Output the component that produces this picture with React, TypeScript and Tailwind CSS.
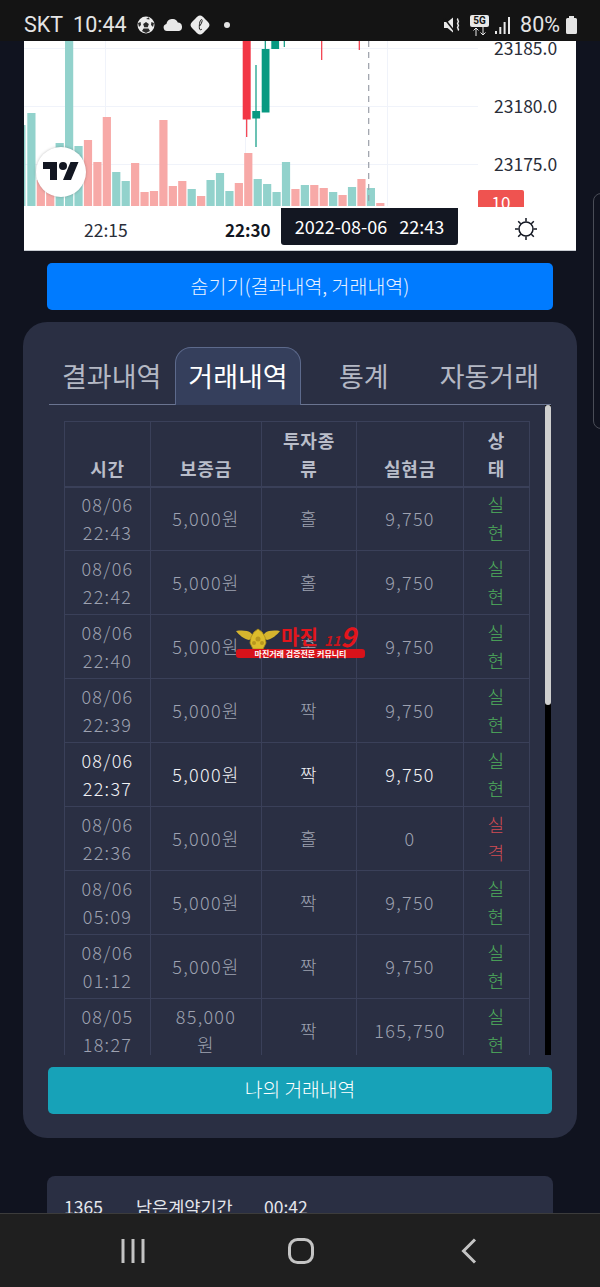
const bars: [number, "t" | "p"][] = [
  [113, "t"], [180, "p"], [183, "p"], [143, "t"], [30, "t"], [146, "t"], [140, "p"], [162, "p"], [117, "p"], [172, "t"],
  [181, "t"], [163, "p"], [192, "p"], [191, "p"], [120, "p"], [186, "p"], [181, "p"], [189, "t"], [196, "p"], [180, "t"],
  [173, "t"], [191, "t"], [183, "p"], [153, "p"], [179, "t"], [184, "t"], [192, "t"], [162, "t"], [189, "p"], [185, "t"],
  [185, "p"], [188, "p"], [192, "t"], [195, "p"], [187, "t"], [179, "p"], [188, "t"], [203, "p"],
];

const rows = [
  { time: ["08/06", "22:43"], deposit: "5,000원", kind: "홀", amount: "9,750", status: "실현" },
  { time: ["08/06", "22:42"], deposit: "5,000원", kind: "홀", amount: "9,750", status: "실현" },
  { time: ["08/06", "22:40"], deposit: "5,000원", kind: "홀", amount: "9,750", status: "실현" },
  { time: ["08/06", "22:39"], deposit: "5,000원", kind: "짝", amount: "9,750", status: "실현" },
  { time: ["08/06", "22:37"], deposit: "5,000원", kind: "짝", amount: "9,750", status: "실현", active: true },
  { time: ["08/06", "22:36"], deposit: "5,000원", kind: "홀", amount: "0", status: "실격" },
  { time: ["08/06", "05:09"], deposit: "5,000원", kind: "짝", amount: "9,750", status: "실현" },
  { time: ["08/06", "01:12"], deposit: "5,000원", kind: "짝", amount: "9,750", status: "실현" },
  { time: ["08/05", "18:27"], deposit: "85,000원", kind: "짝", amount: "165,750", status: "실현" },
];

function StatusBar() {
  return (
    <div className="h-[41px] shrink-0 bg-[#141414] flex items-center pt-[9px] pl-[24px] pr-[23px] font-['Roboto',sans-serif] text-[#e4e4e4] text-[21.5px]">
      <span>SKT</span>
      <span className="ml-[10px]">10:44</span>
      <svg className="ml-[10px]" width="18" height="18" viewBox="0 0 18 18">
        <circle cx="9" cy="9" r="8.500" fill="#ececec" />
        <path d="M9 6l2.800 2-1 3.200H7.200l-1-3.200z" fill="#2a2a2a" />
        <path d="M6 1.200 9 3l3-1.800.6 2.200L9 3zM1 7l2.600-1 .4 3L2 11zM17 7l-2.600-1-.4 3 2 2zM5 15l1.500-2.500h5L13 15l-4 2z" fill="#2a2a2a" />
      </svg>
      <svg className="ml-[8px]" width="20" height="12" viewBox="0 0 20 12">
        <path d="M4 12a3.600 3.600 0 0 1-.6-7.100A6 6 0 0 1 14.800 3.600 4.300 4.300 0 0 1 16 12z" fill="#e8e8e8" />
      </svg>
      <svg className="ml-[7px]" width="20" height="20" viewBox="0 0 20 20">
        <path d="M10 .5c2 0 3 1.500 5 3.500s4.500 4 4.500 6-2.500 4-4.500 6-3 3.500-5 3.500-3-1.500-5-3.500S.5 12 .5 10 3 6 5 4s3-3.500 5-3.500z" fill="#ececec" />
        <path d="M9.500 14c-.6-3 .2-9 2-9.500 1.300 0 .6 3.500-1.800 6.500M9.500 14c.3 1 1.500 1 2.500 0" fill="none" stroke="#222" strokeWidth="1" />
      </svg>
      <span className="ml-[14px] w-[6px] h-[6px] rounded-full bg-[#e4e4e4]" />
      <div className="ml-auto flex items-center">
        <svg width="19" height="18" viewBox="0 0 19 18">
          <path d="M1 6h3.500L10 1.500v15L4.500 12H1z" fill="#e8e8e8" />
          <path d="M1 2l11 14" stroke="#141414" strokeWidth="1.500" />
          <path d="M15 2.500c-1.800 1.500 1.800 2.500 0 4s1.800 2.500 0 4 1.800 2.500 0 4" fill="none" stroke="#e8e8e8" strokeWidth="1.500" />
        </svg>
        <div className="ml-[8px] flex flex-col items-center w-[19px]">
          <span className="w-[19px] h-[12px] rounded-[2px] bg-[#e8e8e8] text-[#141414] text-[10px] leading-[12px] font-bold text-center">5G</span>
          <svg width="15" height="9" viewBox="0 0 15 9">
            <path d="M4 9V1M1.500 3.500 4 1l2.500 2.500M11 0v8M8.500 5.500 11 8l2.500-2.500" fill="none" stroke="#e8e8e8" strokeWidth="1" />
          </svg>
        </div>
        <svg className="ml-[6px]" width="15" height="17" viewBox="0 0 15 17">
          <rect x="0" y="14" width="2" height="3" fill="#e8e8e8" />
          <rect x="4.300" y="10" width="2" height="7" fill="#e8e8e8" />
          <rect x="8.600" y="5" width="2" height="12" fill="#e8e8e8" />
          <rect x="13" y="0" width="2" height="17" fill="#e8e8e8" />
        </svg>
        <span className="ml-[10px]">80%</span>
        <svg className="ml-[6px]" width="11" height="18" viewBox="0 0 11 18">
          <path d="M3 0h5v2h1.500A1.500 1.500 0 0 1 11 3.500V16.500A1.500 1.500 0 0 1 9.500 18h-8A1.500 1.500 0 0 1 0 16.500V3.500A1.500 1.500 0 0 1 1.500 2H3z" fill="#e4e4e4" />
        </svg>
      </div>
    </div>
  );
}

function Chart() {
  return (
    <div className="relative h-[210px] mx-[24px] bg-white border-b border-[#c9ccd2] overflow-hidden">
      {/* svg coords are screen coords, chart starts at 24,41 */}
      <svg className="absolute inset-0" width="552" height="210" viewBox="24 41 552 210">
        <g stroke="#f0f3fa" strokeWidth="1">
          <path d="M24 48.500H478M24 106.500H478M24 164.500H478" />
          <path d="M105.500 41V206M245.500 41V206M387.500 41V206" />
        </g>
        <rect x="24" y="125" width="1.500" height="81" fill="#92d2cc" />
        {bars.map(([top, kind], i) => (
          <rect
            key={i}
            x={27.3 + 9.43 * i}
            y={top}
            width="8.200"
            height={206 - top}
            fill={kind === "t" ? "#92d2cc" : "#f7a9a7"}
          />
        ))}
        <path d="M246.700 119v18" stroke="#f23645" strokeWidth="1.200" />
        <rect x="242.700" y="30" width="8" height="89.500" fill="#f23645" />
        <path d="M256 65v82" stroke="#089981" strokeWidth="1.200" />
        <rect x="252.300" y="111" width="7.800" height="7.500" fill="#089981" />
        <path d="M265.300 30v20" stroke="#089981" strokeWidth="1.200" />
        <rect x="261.700" y="49" width="7.800" height="63.500" fill="#089981" />
        <rect x="271.300" y="30" width="7.800" height="19" fill="#089981" />
        <path d="M284.300 30v17" stroke="#089981" strokeWidth="1.200" />
        <path d="M321.700 30v30M359.300 30v20" stroke="#f23645" strokeWidth="1.200" />
        <path d="M368.700 41V206" stroke="#9a9ea8" strokeWidth="1.200" strokeDasharray="6 5" />
      </svg>

      {[
        ["23185.0", "top-[-5px]"],
        ["23180.0", "top-[53px]"],
        ["23175.0", "top-[111px]"],
      ].map(([label, top]) => (
        <span key={label} className={`absolute left-[470px] text-[17.500px] leading-[24px] text-[#2a2e39] ${top}`}>
          {label}
        </span>
      ))}
      <span className="absolute left-[454px] top-[149px] w-[46px] h-[17px] rounded-t-[2px] bg-[#ef5350] text-white text-[17px] leading-[24px] text-center overflow-hidden">
        10
      </span>

      <div className="absolute left-[12px] top-[106px] w-[50px] h-[50px] rounded-full bg-white shadow-[0_0_3px_rgba(0,0,0,0.25)] flex items-center justify-center">
        <svg width="36" height="28" viewBox="0 0 36 28">
          <path d="M14 22H7V11H0V4h14v18zM28 22h-8l7.500-18h8L28 22z" fill="#131722" />
          <circle cx="20" cy="8" r="4" fill="#131722" />
        </svg>
      </div>

      <span className="absolute left-[60px] top-[177px] text-[17.500px] leading-[24px] text-[#2a2e39]">22:15</span>
      <span className="absolute left-[201px] top-[177px] text-[17px] leading-[24px] font-bold text-[#131722]">22:30</span>
      <div className="absolute left-[257px] top-[167px] w-[177px] h-[37px] rounded-b-[3px] bg-[#131722] text-white text-[18px] leading-[37px] text-center whitespace-nowrap">
        2022-08-06&nbsp;&nbsp;&nbsp;22:43
      </div>
      <svg className="absolute left-[490px] top-[176px]" width="24" height="24" viewBox="0 0 24 24" fill="none" stroke="#131722" strokeWidth="1.500">
        <circle cx="12" cy="12" r="7" />
        <path d="M12 1v3.500M12 19.500V23M1 12h3.500M19.500 12H23M4.200 4.200l2.500 2.500M17.300 17.300l2.500 2.500M4.200 19.800l2.500-2.500M17.300 6.700l2.500-2.500" />
      </svg>
    </div>
  );
}

function Tabs() {
  return (
    <div className="flex items-end h-[58px] border-b border-[#6a7490] text-[27px] leading-[40px] text-[#b4b8c4]">
      <span className="pl-[13px] w-[126px] pb-[8px]">결과내역</span>
      <span className="w-[126px] h-[58px] -mb-px pt-[8px] text-center text-white bg-[#353f5c] border border-b-0 border-[#5d6a8c] rounded-t-[16px]">거래내역</span>
      <span className="ml-[38px] pb-[8px]">통계</span>
      <span className="ml-[51px] pb-[8px] whitespace-nowrap">자동거래</span>
    </div>
  );
}

function TradeTable() {
  return (
    <div className="flex h-[650px] overflow-hidden">
      <div className="w-[496px] pt-[16px] pl-[15px]">
        <table className="w-[465px] table-fixed border-collapse text-[18px] leading-[28px] tracking-[1.3px] text-center">
          <colgroup>
            <col className="w-[86px]" />
            <col className="w-[111px]" />
            <col className="w-[95px]" />
            <col className="w-[107px]" />
            <col className="w-[66px]" />
          </colgroup>
          <thead>
            <tr className="h-[65px] text-[#b9bdc9] font-bold text-[18px] tracking-[0.8px] border-b-[2px] border-[#3a4059]">
              {["시간", "보증금", "투자종류", "실현금", "상태"].map((h, i) => (
                <th key={h} className={`border border-[#3a4059] align-bottom pb-[4px] ${i === 4 ? "px-[20px]" : i === 2 ? "px-[18px]" : "px-[12px]"}`}>
                  {h}
                </th>
              ))}
            </tr>
          </thead>
          <tbody>
            {rows.map((row) => {
              const text = row.active ? "text-[#f2f3f6]" : "text-[#9ea2b1]";
              return (
                <tr key={row.time.join()} className="h-[64px]">
                  <td className={`border border-[#3a4059] font-light pb-[2px] ${text}`}>
                    {row.time[0]}
                    <br />
                    {row.time[1]}
                  </td>
                  <td className={`border border-[#3a4059] font-light px-[20px] pb-[2px] ${text}`}>{row.deposit}</td>
                  <td className={`border border-[#3a4059] font-light pb-[2px] ${text}`}>{row.kind}</td>
                  <td className={`border border-[#3a4059] font-light pb-[2px] ${text}`}>{row.amount}</td>
                  <td className={`border border-[#3a4059] font-light px-[21px] pb-[2px] ${row.status === "실격" ? "text-[#d04c54]" : "text-[#4fb05c]"}`}>
                    {row.status}
                  </td>
                </tr>
              );
            })}
          </tbody>
        </table>
      </div>
      <div className="ml-[1px] w-[6px] bg-black">
        <div className="h-[300px] rounded-[3px] bg-[#cfcfcf]" />
      </div>
    </div>
  );
}

function Watermark() {
  return (
    <div className="absolute left-[236px] top-[628px] w-[129px] h-[31px]">
      <svg className="absolute left-0 top-0" width="46" height="24" viewBox="0 0 46 24">
        <path d="M0 3c6-1 12-.5 15 2l3 4-5 3C8 11 3 7 0 3zM44 3c-6-1-12-.5-15 2l-3 4 5 3c5-1 10-5 13-9z" fill="#d6b52e" />
        <path d="M22 1l4 3 3 5 1 6-3 6h-10l-3-6 1-6 3-5z" fill="#dcbc2c" stroke="#a98a18" strokeWidth="0.800" />
        <circle cx="22" cy="11" r="2.500" fill="#b8961e" />
        <circle cx="18" cy="15" r="2" fill="#b8961e" />
        <circle cx="26" cy="15" r="2" fill="#b8961e" />
      </svg>
      <span className="absolute left-[45px] top-[-5px] text-[20px] leading-[28px] font-bold text-[#e3151c]">마진</span>
      <span className="absolute left-[88px] top-[2px] text-[14px] leading-[20px] font-bold italic text-[#c8141b]">11</span>
      <span className="absolute left-[104px] top-[-9px] text-[27px] leading-[34px] font-bold italic text-[#e3151c]">9</span>
      <div className="absolute left-0 top-[21px] w-[129px] h-[9px] rounded-[3px] bg-[#d8121a] text-white text-[8px] leading-[9px] font-bold text-center">
        마진거래 검증전문 커뮤니티
      </div>
    </div>
  );
}

export default function App() {
  return (
    <div className="relative w-[600px] h-[1287px] overflow-hidden flex flex-col bg-[#10131f] font-['Noto_Sans_CJK_KR',sans-serif]">
      <StatusBar />

      <main className="flex-1 overflow-hidden">
        <Chart />

        <button className="block mt-[12px] mx-[47px] w-[506px] h-[47px] rounded-[5px] bg-[#007bff] text-[#e8f1ff] text-[19.500px] font-light pb-[2px]">
          숨기기(결과내역, 거래내역)
        </button>

        <section className="mt-[12px] mx-[23px] w-[554px] h-[816px] rounded-[24px] bg-[#2a2f43] pt-[25px] px-[26px]">
          <Tabs />
          <TradeTable />
          <button className="block mt-[12px] -ml-px w-[504px] h-[47px] rounded-[5px] bg-[#17a2b8] text-white text-[19.300px] font-light pb-[2px]">
            나의 거래내역
          </button>
        </section>

        <section className="mt-[38px] mx-[47px] w-[506px] h-[120px] rounded-[8px] bg-[#2a2f43] pl-[17px] pt-[19px] text-[#e4e6ec] text-[17.500px] leading-[24px] flex">
          <span className="w-[72px]">1365</span>
          <span className="w-[128px]">남은계약기간</span>
          <span>00:42</span>
        </section>
      </main>

      <nav className="h-[74px] shrink-0 bg-[#1f1f1f] border-t border-[#3c3c3c] flex items-center justify-center pl-[2px] text-[#c4c4c4]">
        <div className="w-[168px] flex justify-center">
          <svg width="24" height="26" viewBox="0 0 24 26" fill="none" stroke="currentColor" strokeWidth="3">
            <path d="M2 1v24M12 1v24M22 1v24" />
          </svg>
        </div>
        <div className="w-[168px] flex justify-center">
          <svg width="26" height="26" viewBox="0 0 26 26" fill="none" stroke="currentColor" strokeWidth="3">
            <rect x="1.500" y="1.500" width="23" height="23" rx="8" />
          </svg>
        </div>
        <div className="w-[168px] flex justify-center">
          <svg width="16" height="26" viewBox="0 0 16 26" fill="none" stroke="currentColor" strokeWidth="3">
            <path d="M14 1.500 2.500 13 14 24.500" />
          </svg>
        </div>
      </nav>

      <Watermark />
      <div className="absolute left-[593px] top-[193px] w-[20px] h-[236px] rounded-[8px] border border-[#4a4d57]" />
    </div>
  );
}
